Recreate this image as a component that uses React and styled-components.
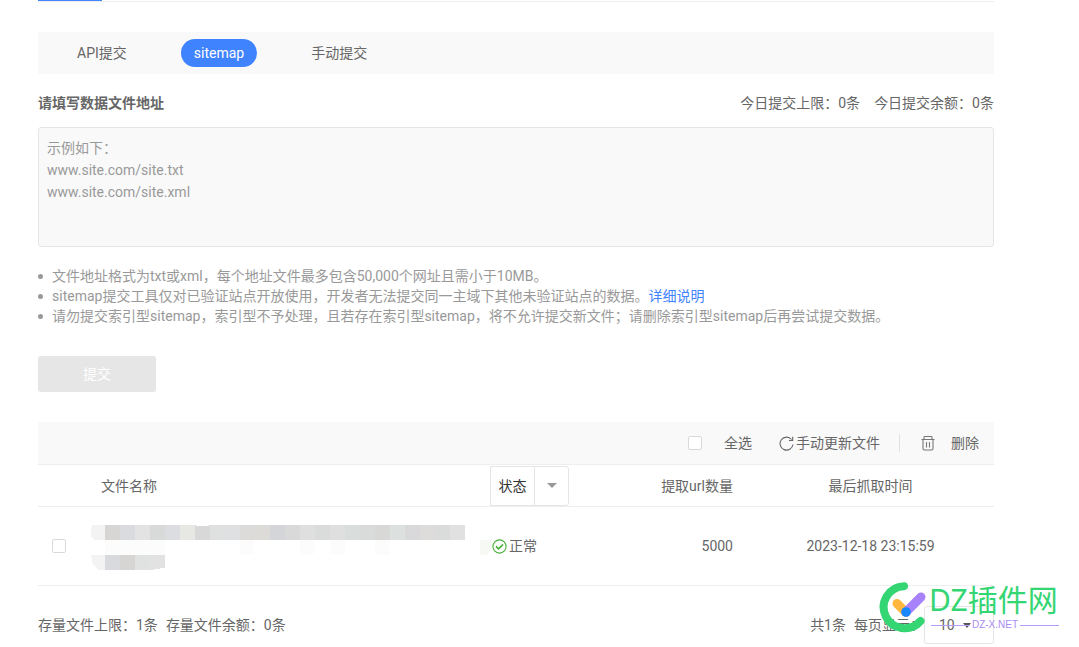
import React from "react";
import styled, { createGlobalStyle } from "styled-components";

const GlobalStyle = createGlobalStyle`
  *, *::before, *::after { box-sizing: border-box; }
  body {
    margin: 0;
    background: #fff;
    color: #666;
    font: 14px/20px Roboto, "Noto Sans CJK SC", sans-serif;
  }
  button, input, textarea, select { font: inherit; color: inherit; margin: 0; }
`;

const Page = styled.main`
  padding: 0 85px 3px 38px;
`;

const TabLine = styled.div`
  height: 2px;
  border-bottom: 1px solid #eee;
`;

const ActiveTabMark = styled.div`
  width: 64px;
  height: 1px;
  background: #4285ff;
`;

const ModeBar = styled.nav`
  display: flex;
  align-items: center;
  gap: 41px;
  height: 42px;
  margin-top: 30px;
  padding: 0 26px;
  background: #f9f9f9;
`;

const ModeButton = styled.button`
  height: 28px;
  padding: 0 13px;
  border: 0;
  border-radius: 14px;
  background: ${(p) => (p.$active ? "#4083ff" : "transparent")};
  color: ${(p) => (p.$active ? "#fff" : "#666")};
`;

const FieldHeader = styled.div`
  display: flex;
  justify-content: space-between;
  margin: 19px 0 14px;
`;

const FieldLabel = styled.label`
  font-weight: 700;
`;

const Quota = styled.div`
  display: flex;
  gap: ${(p) => p.$gap}px;
`;

const AddressInput = styled.textarea`
  display: block;
  width: 100%;
  height: 120px;
  padding: 9px 8px;
  border: 1px solid #e5e5e5;
  border-radius: 3px;
  background: #f9f9f9;
  line-height: 22px;
  resize: none;
  &::placeholder { color: #999; opacity: 1; }
`;

const Notes = styled.ul`
  margin: 19px 0 30px;
  padding: 0;
  list-style: none;
  color: #999;
`;

const Note = styled.li`
  display: flex;
  align-items: center;
  gap: 9px;
  &::before {
    content: "";
    width: 5px;
    height: 5px;
    border-radius: 50%;
    background: #999;
  }
`;

const DetailLink = styled.a`
  color: #4083ff;
  text-decoration: none;
`;

const SubmitButton = styled.button`
  width: 118px;
  height: 36px;
  border: 0;
  border-radius: 3px;
  background: #e6e6e6;
  color: #fff;
`;

const Toolbar = styled.div`
  display: flex;
  align-items: center;
  justify-content: flex-end;
  height: 43px;
  margin-top: 30px;
  padding-right: 15px;
  border-bottom: 1px solid #eee;
  background: #f9f9f9;
`;

const CheckAll = styled.label`
  display: flex;
  align-items: center;
  gap: 22px;
  margin-right: 27px;
`;

const Checkbox = styled.input`
  appearance: none;
  display: block;
  width: 14px;
  height: 14px;
  border: 1px solid #d9d9d9;
  border-radius: 2px;
  background: #fff;
`;

const ToolButton = styled.button`
  display: flex;
  align-items: center;
  gap: ${(p) => p.$gap}px;
  padding: 0;
  border: 0;
  background: none;
`;

const Divider = styled.span`
  width: 1px;
  height: 18px;
  margin: 0 21px 0 19px;
  background: #e2e2e2;
`;

const FileTable = styled.table`
  width: 100%;
  border-spacing: 0;
  table-layout: fixed;
`;

const Column = styled.col`
  width: ${(p) => p.$width}px;
`;

const Row = styled.tr`
  height: ${(p) => p.$height}px;
  & > * { border-bottom: 1px solid #eee; }
`;

const HeadCell = styled.th`
  padding: 0 0 0 ${(p) => p.$left || 0}px;
  text-align: ${(p) => p.$align || "left"};
  font-weight: 400;
`;

const Cell = styled.td`
  padding: 0 0 0 ${(p) => p.$left || 0}px;
  text-align: ${(p) => p.$align || "left"};
`;

const StatusFilter = styled.button`
  display: flex;
  align-items: center;
  width: 79px;
  height: 40px;
  padding: 0;
  border: 1px solid #e5e5e5;
  border-radius: 0 3px 3px 0;
  background: #fff;
  color: #333;
`;

const FilterText = styled.span`
  flex: 1;
  line-height: 38px;
  border-right: 1px solid #e5e5e5;
`;

const FilterArrow = styled.span`
  display: flex;
  justify-content: center;
  width: 33px;
`;

const Status = styled.span`
  display: flex;
  align-items: center;
  gap: 2px;
`;

const Footer = styled.footer`
  position: relative;
  display: flex;
  align-items: center;
  justify-content: space-between;
  margin-top: 20px;
`;

const Pager = styled.div`
  display: flex;
  align-items: center;
  gap: 8px;
`;

const PageSizeLabel = styled.label`
  display: flex;
  align-items: center;
`;

const SizeBox = styled.span`
  display: grid;
  align-items: center;
  width: 70px;
  height: 38px;
  border: 1px solid #e5e5e5;
  border-radius: 3px;
  & > * { grid-area: 1 / 1; }
  & > svg { justify-self: end; margin-right: 22px; pointer-events: none; }
`;

const SizeSelect = styled.select`
  appearance: none;
  width: 100%;
  height: 36px;
  padding: 0 14px;
  border: 0;
  background: transparent;
`;

const Watermark = styled.div`
  position: absolute;
  right: -67px;
  bottom: 11px;
  display: flex;
  gap: 3px;
  pointer-events: none;
`;

const BrandText = styled.div`
  display: flex;
  flex-direction: column;
  gap: 1px;
  width: 132px;
`;

const BrandName = styled.span`
  color: #34d573;
  font-family: "Noto Sans", "Noto Sans CJK SC", sans-serif;
  font-size: 30px;
  line-height: 36px;
  white-space: nowrap;
`;

const BrandDomain = styled.span`
  display: flex;
  align-items: center;
  gap: 2px;
  padding: 0 2px;
  color: #a98bf5;
  font-family: "Liberation Sans", sans-serif;
  font-size: 10px;
  line-height: 12px;
  &::before, &::after { content: ""; flex: 1; height: 1px; background: #b49cf8; }
`;

const NameMosaic = styled.svg`
  display: block;
  margin-top: 2px;
`;

const RefreshIcon = () => (
  <svg width="15" height="15" viewBox="0 0 15 15" fill="none" stroke="#666" strokeWidth="1.1">
    <path d="M14 8.500A6.500 6.500 0 1 1 12.600 3.500" />
    <path d="M13.700 .8v3.700H10" />
  </svg>
);

const TrashIcon = () => (
  <svg width="14" height="15" viewBox="0 0 14 15" fill="none" stroke="#777" strokeWidth="1.1">
    <path d="M.5 3.500h13M3 3.500v-2.200q0-.8.8-.8h6.400q.8 0 .8.8v2.200M2 3.500v9q0 1.500 1.500 1.500h7q1.500 0 1.500-1.500v-9M5.500 6v5.500M8.500 6v5.500" />
  </svg>
);

const CheckIcon = () => (
  <svg width="15" height="15" viewBox="0 0 15 15" fill="none" stroke="#44b035">
    <circle cx="7.500" cy="7.500" r="6.600" strokeWidth="1.100" />
    <path d="M4 7.300l2.600 2.600L11 5.500" strokeWidth="1.700" />
  </svg>
);

const Caret = ({ width, color }) => (
  <svg width={width} height="5" viewBox="0 0 10 5" preserveAspectRatio="none" fill={color}>
    <path d="M0 0h10L5 5z" />
  </svg>
);

const TOP_TILES = ["#d8d6d5", "#dadbde", "#e3e3e4", "#d7dad9", "#dbdde0", "#e7e7e4", "#d8d8d9", "#dfe1e0", "#dfe0e1", "#dddbd9", "#dddbd8", "#d4d5d8", "#d9d9da", "#dfdfe0", "#d9dcdb", "#dfdfdf", "#d9dddc", "#d9dada", "#d8d8d6", "#dce0df", "#d9d9dc", "#dddcda", "#d9dcdb", "#dededc"];
const BOTTOM_TILES = ["#d9dadd", "#d7d5d3", "#dfe2e0"];

const HiddenName = () => (
  <NameMosaic width="404" height="45" viewBox="0 0 404 45" shapeRendering="crispEdges" role="img" aria-label="文件名称">
    {TOP_TILES.map((c, i) => (
      <rect key={i} x={14 + i * 15} y="0" width="15" height="15" fill={c} />
    ))}
    <path d="M1 0h13v15H3L0 11V5z" fill="#f3f3f3" />
    <path d="M359 0h15v15h-15z" fill="#e1e1e2" />
    <path d="M105 0h13v1h-13z" fill="#fff" />
    <path d="M14 15h60v15H14zM149 15h14v14h-14zM209 15h14v14h-14zM239 15h15v14h-15zM284 15h15v15h-15z" fill="#fcfcfc" />
    <path d="M0 30h14v15H7L2 40z" fill="#f3f3f3" />
    {BOTTOM_TILES.map((c, i) => (
      <rect key={i} x={14 + i * 15} y="30" width="15" height="15" fill={c} />
    ))}
    <path d="M59 30h15v13h-5v1h-6v1h-4z" fill="#e2e2e3" />
    <path d="M389 15h12v8l-5 7h-7z" fill="#f7f9f5" />
  </NameMosaic>
);

const BrandMark = () => (
  <svg width="48" height="51" viewBox="0 0 48 51" fill="none" strokeLinecap="round">
    <path d="M26 4.200A21 21 0 1 0 42.500 39" stroke="#34d573" strokeWidth="8" />
    <path d="M19 21.500L28 30.500" stroke="#ffb83d" strokeWidth="9" />
    <path d="M43 15L28 30" stroke="#a782fb" strokeWidth="9" />
    <circle cx="28" cy="30" r="4.800" fill="#1788ff" />
  </svg>
);

export default function App() {
  return (
    <>
      <GlobalStyle />
      <Page>
        <TabLine><ActiveTabMark /></TabLine>
        <ModeBar>
          <ModeButton type="button">API提交</ModeButton>
          <ModeButton type="button" $active>sitemap</ModeButton>
          <ModeButton type="button">手动提交</ModeButton>
        </ModeBar>
        <FieldHeader>
          <FieldLabel htmlFor="address">请填写数据文件地址</FieldLabel>
          <Quota $gap={14}><span>今日提交上限：0条</span><span>今日提交余额：0条</span></Quota>
        </FieldHeader>
        <AddressInput id="address" placeholder={"示例如下：\nwww.site.com/site.txt\nwww.site.com/site.xml"} />
        <Notes>
          <Note><span>文件地址格式为txt或xml，每个地址文件最多包含50,000个网址且需小于10MB。</span></Note>
          <Note><span>sitemap提交工具仅对已验证站点开放使用，开发者无法提交同一主域下其他未验证站点的数据。<DetailLink href="#detail">详细说明</DetailLink></span></Note>
          <Note><span>请勿提交索引型sitemap，索引型不予处理，且若存在索引型sitemap，将不允许提交新文件；请删除索引型sitemap后再尝试提交数据。</span></Note>
        </Notes>
        <SubmitButton type="button" disabled>提交</SubmitButton>

        <Toolbar>
          <CheckAll><Checkbox type="checkbox" />全选</CheckAll>
          <ToolButton type="button" $gap={2}><RefreshIcon />手动更新文件</ToolButton>
          <Divider />
          <ToolButton type="button" $gap={16}><TrashIcon />删除</ToolButton>
        </Toolbar>
        <FileTable>
          <colgroup>
            <Column $width={53} />
            <col />
            <Column $width={124} />
            <Column $width={119} />
            <Column $width={261} />
          </colgroup>
          <thead>
            <Row $height={42}>
              <HeadCell />
              <HeadCell $left={10}>文件名称</HeadCell>
              <HeadCell><StatusFilter type="button"><FilterText>状态</FilterText><FilterArrow><Caret width={10} color="#999" /></FilterArrow></StatusFilter></HeadCell>
              <HeadCell $align="right">提取url数量</HeadCell>
              <HeadCell $align="center" $left={14}>最后抓取时间</HeadCell>
            </Row>
          </thead>
          <tbody>
            <Row $height={79}>
              <Cell $left={14}><Checkbox type="checkbox" aria-label="选择文件" /></Cell>
              <Cell><HiddenName /></Cell>
              <Cell $left={2}><Status><CheckIcon />正常</Status></Cell>
              <Cell $align="right">5000</Cell>
              <Cell $align="center" $left={14}>2023-12-18 23:15:59</Cell>
            </Row>
          </tbody>
        </FileTable>
        <Footer>
          <Quota $gap={8}><span>存量文件上限：1条</span><span>存量文件余额：0条</span></Quota>
          <Pager>
            <span>共1条</span>
            <PageSizeLabel>
              每页显示：
              <SizeBox>
                <SizeSelect defaultValue="10"><option>10</option><option>20</option><option>50</option></SizeSelect>
                <Caret width={8} color="#555" />
              </SizeBox>
            </PageSizeLabel>
          </Pager>
          <Watermark>
            <BrandMark />
            <BrandText>
              <BrandName>DZ插件网</BrandName>
              <BrandDomain>DZ-X.NET</BrandDomain>
            </BrandText>
          </Watermark>
        </Footer>
      </Page>
    </>
  );
}
